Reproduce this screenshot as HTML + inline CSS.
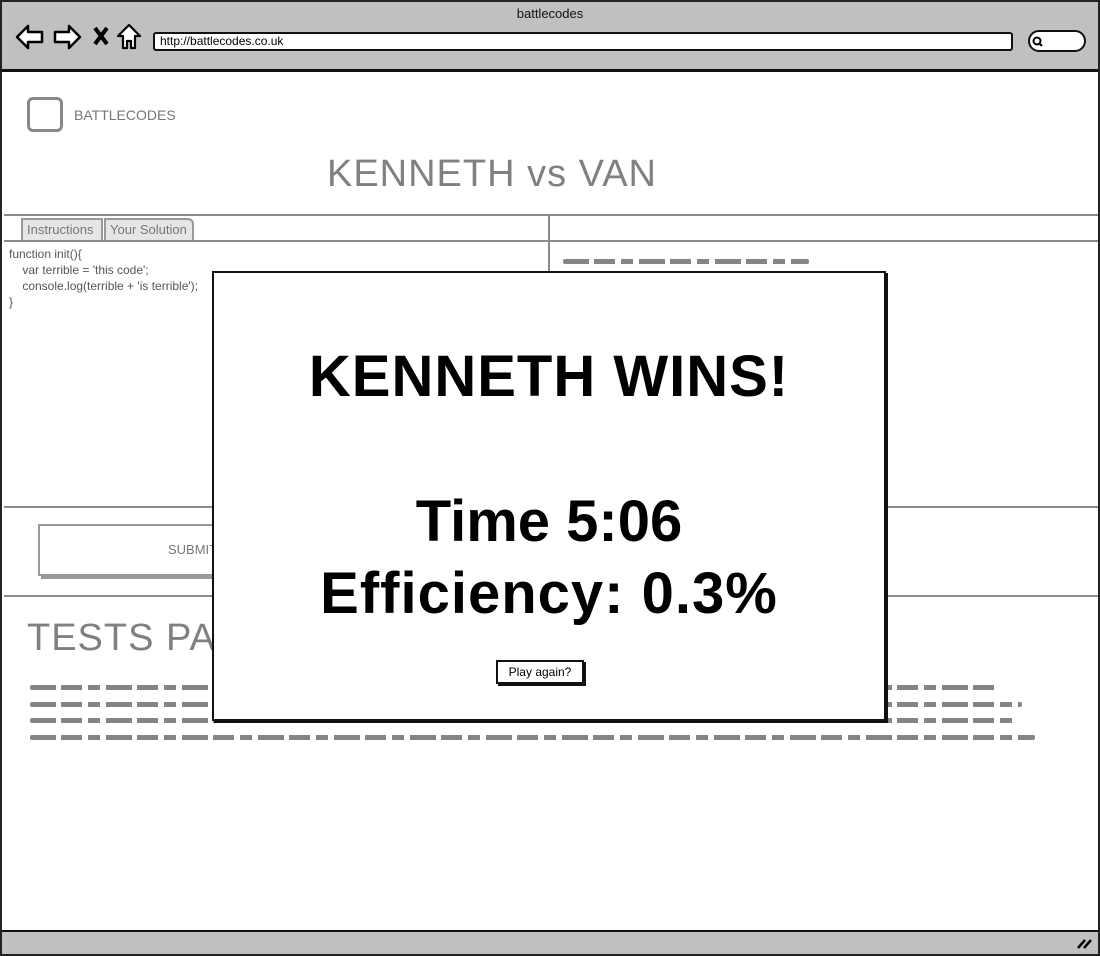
<!DOCTYPE html>
<html><head><meta charset="utf-8"><style>
*{margin:0;padding:0;box-sizing:border-box}
body{width:1100px;height:956px;position:relative;background:#fff;font-family:"Liberation Sans",sans-serif;overflow:hidden}
.a{position:absolute}
.hl{position:absolute;height:2px;background:#8a8a8a}
.vl{position:absolute;width:2px;background:#8a8a8a}
.scr{position:absolute;height:5px;background:repeating-linear-gradient(90deg,#777 0 26px,transparent 26px 31px,#777 31px 52px,transparent 52px 58px,#777 58px 70px,transparent 70px 76px);border-radius:2px;opacity:.9}
</style></head><body>
<div class="a" style="left:0;top:0;width:1100px;height:956px;border:2px solid #222"></div>
<div class="a" style="left:2px;top:2px;width:1096px;height:70px;background:#c0c0c0;border-bottom:3px solid #111"></div>
<div class="a" style="left:0;top:6px;width:1100px;text-align:center;font-size:13px;color:#111">battlecodes</div>
<svg class="a" style="left:14px;top:22px" width="130" height="30" viewBox="0 0 130 30">
<path d="M3 15 L14 4 L14 10 L28 10 L28 20 L14 20 L14 26 Z" fill="#fff" stroke="#000" stroke-width="2.5" stroke-linejoin="round"/>
<path d="M66 15 L55 4 L55 10 L41 10 L41 20 L55 20 L55 26 Z" fill="#fff" stroke="#000" stroke-width="2.5" stroke-linejoin="round"/>
<path d="M81 6 L93 22 M93 6 L81 22" stroke="#000" stroke-width="4"/>
<path d="M104 14 L115 3 L126 14 L121 14 L121 26 L117 26 L117 19 L113 19 L113 26 L109 26 L109 14 Z" fill="#fff" stroke="#000" stroke-width="2.2" stroke-linejoin="round"/>
</svg>
<div class="a" style="left:153px;top:32px;width:860px;height:19px;background:#fff;border:2px solid #111;border-radius:3px;font-size:12px;line-height:15px;padding-left:5px;color:#000">http://battlecodes.co.uk</div>
<div class="a" style="left:1028px;top:30px;width:58px;height:22px;background:#fff;border:2px solid #111;border-radius:12px"></div>
<svg class="a" style="left:1031px;top:35px" width="14" height="14"><circle cx="6" cy="6" r="3.5" fill="none" stroke="#000" stroke-width="2"/><path d="M8 8 L11 11" stroke="#000" stroke-width="2"/></svg>
<div class="a" style="left:2px;top:930px;width:1096px;height:24px;background:#c0c0c0;border-top:2px solid #111"></div>
<svg class="a" style="left:1076px;top:936px" width="18" height="14"><path d="M2 12 L9 4 M8 12 L15 4" stroke="#000" stroke-width="2.5"/></svg>

<div class="a" style="left:27px;top:97px;width:36px;height:35px;border:3px solid #888;border-radius:6px"></div>
<div class="a" style="left:74px;top:107px;font-size:14px;color:#777">BATTLECODES</div>
<div class="a" style="left:0;top:153px;width:984px;text-align:center;font-size:38px;color:#808080;letter-spacing:1px">KENNETH vs VAN</div>

<div class="hl" style="left:4px;top:214px;width:1094px"></div>
<div class="hl" style="left:4px;top:240px;width:1094px"></div>
<div class="vl" style="left:548px;top:214px;height:294px"></div>
<div class="a" style="left:21px;top:218px;width:82px;height:22px;background:#e6e6e6;border:2px solid #999;border-bottom:none;font-size:13px;color:#777;padding:2px 0 0 4px">Instructions</div>
<div class="a" style="left:104px;top:218px;width:90px;height:22px;background:#e6e6e6;border:2px solid #999;border-bottom:none;font-size:13px;color:#777;padding:2px 0 0 4px;border-radius:0 6px 0 0">Your Solution</div>
<div class="a" style="left:9px;top:246px;font-size:12px;line-height:16px;color:#555;white-space:pre">function init(){
    var terrible = 'this code';
    console.log(terrible + 'is terrible');
}</div>
<div class="scr" style="left:563px;top:259px;width:246px"></div>

<div class="hl" style="left:4px;top:506px;width:1094px"></div>
<div class="hl" style="left:4px;top:595px;width:1094px"></div>
<div class="a" style="left:38px;top:524px;width:500px;height:52px;border:2px solid #999;box-shadow:3px 3px 0 #999;font-size:13px;color:#777;line-height:48px;padding-left:128px">SUBMIT</div>
<div class="a" style="left:27px;top:617px;font-size:38px;color:#808080;letter-spacing:1px">TESTS PASSED</div>
<div class="scr" style="left:30px;top:685px;width:970px"></div>
<div class="scr" style="left:30px;top:702px;width:992px"></div>
<div class="scr" style="left:30px;top:718px;width:985px"></div>
<div class="scr" style="left:30px;top:735px;width:1005px"></div>

<div class="a" style="left:212px;top:271px;width:674px;height:450px;background:#fff;border:2px solid #111;box-shadow:2px 2px 0 #111"></div>
<div class="a" style="left:212px;top:343px;width:674px;text-align:center;font-size:58px;font-weight:bold;color:#000;letter-spacing:1px">KENNETH WINS!</div>
<div class="a" style="left:212px;top:488px;width:674px;text-align:center;font-size:58px;font-weight:bold;color:#000">Time 5:06</div>
<div class="a" style="left:212px;top:560px;width:674px;text-align:center;font-size:58px;font-weight:bold;color:#000;letter-spacing:1px">Efficiency: 0.3%</div>
<div class="a" style="left:496px;top:660px;width:88px;height:24px;border:2px solid #111;box-shadow:2px 2px 0 #111;font-size:12px;text-align:center;line-height:20px;background:#fff">Play again?</div>
</body></html>
